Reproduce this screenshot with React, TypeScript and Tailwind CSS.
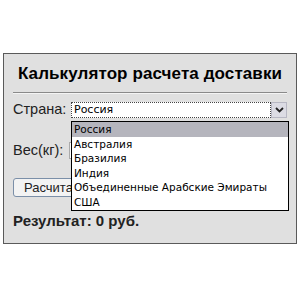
import React from 'react';

const countries = [
  'Россия',
  'Австралия',
  'Бразилия',
  'Индия',
  'Объединенные Арабские Эмираты',
  'США',
];

export default function App() {
  return (
    <div className="w-[300px] h-[300px] bg-white pt-[53px] px-[3px] font-['Liberation_Sans',Arial,sans-serif] text-black">
      <div className="h-[191px] border border-[#5a5a5a] bg-[#e0e0e0] px-[9px]">
        <h1 className="pt-[10px] text-center text-[17px] font-bold leading-[20px] tracking-[0.1px]">
          Калькулятор расчета доставки
        </h1>
        <div className="mt-[8px] h-[2px] border-t border-[#8a8a8a] bg-[#f4f4f4]" />

        <div className="mt-[8px] flex items-center h-[16px]">
          <span className="w-[58px] text-[14.5px] text-[#222]">Страна:</span>
          <div className="relative w-[216px]">
            <div className="flex h-[16px] items-stretch bg-white">
              <div className="flex-1 border border-dotted border-[#444] px-[2px] text-[11px] leading-[13px] font-['DejaVu_Sans',sans-serif]">
                Россия
              </div>
              <div className="w-[16px] flex items-center justify-center bg-[#dcdce4] border border-[#b8b8c4]">
                <svg width="9" height="6" viewBox="0 0 9 6">
                  <path d="M1 1 L4.5 4.5 L8 1" stroke="#222" strokeWidth="1.8" fill="none" />
                </svg>
              </div>
            </div>
            <div className="absolute left-0 top-[19px] w-[218px] border border-black bg-white font-['DejaVu_Sans',sans-serif] text-[10.5px] leading-[14.6px] text-black z-10">
              {countries.map((c, i) => (
                <div key={c} className={`px-[2px] ${i === 0 ? 'bg-[#b5b5bd]' : ''}`}>
                  {c}
                </div>
              ))}
            </div>
          </div>
        </div>

        <div className="mt-[24px] flex items-center h-[17px]">
          <span className="w-[56px] text-[14.5px] text-[#222]">Вес(кг):</span>
          <div className="h-[17px] w-[120px] border border-[#aaa] bg-white" />
        </div>

        <button className="mt-[19px] h-[19px] px-[10px] rounded-[3px] border border-[#7b8fa8] bg-[#f3f3f3] text-[13px] leading-[15px] text-[#222]">
          Расчитать
        </button>

        <div className="mt-[13px] text-[15px] leading-[17px] font-bold text-[#222]">Результат: 0 руб.</div>
      </div>
    </div>
  );
}
